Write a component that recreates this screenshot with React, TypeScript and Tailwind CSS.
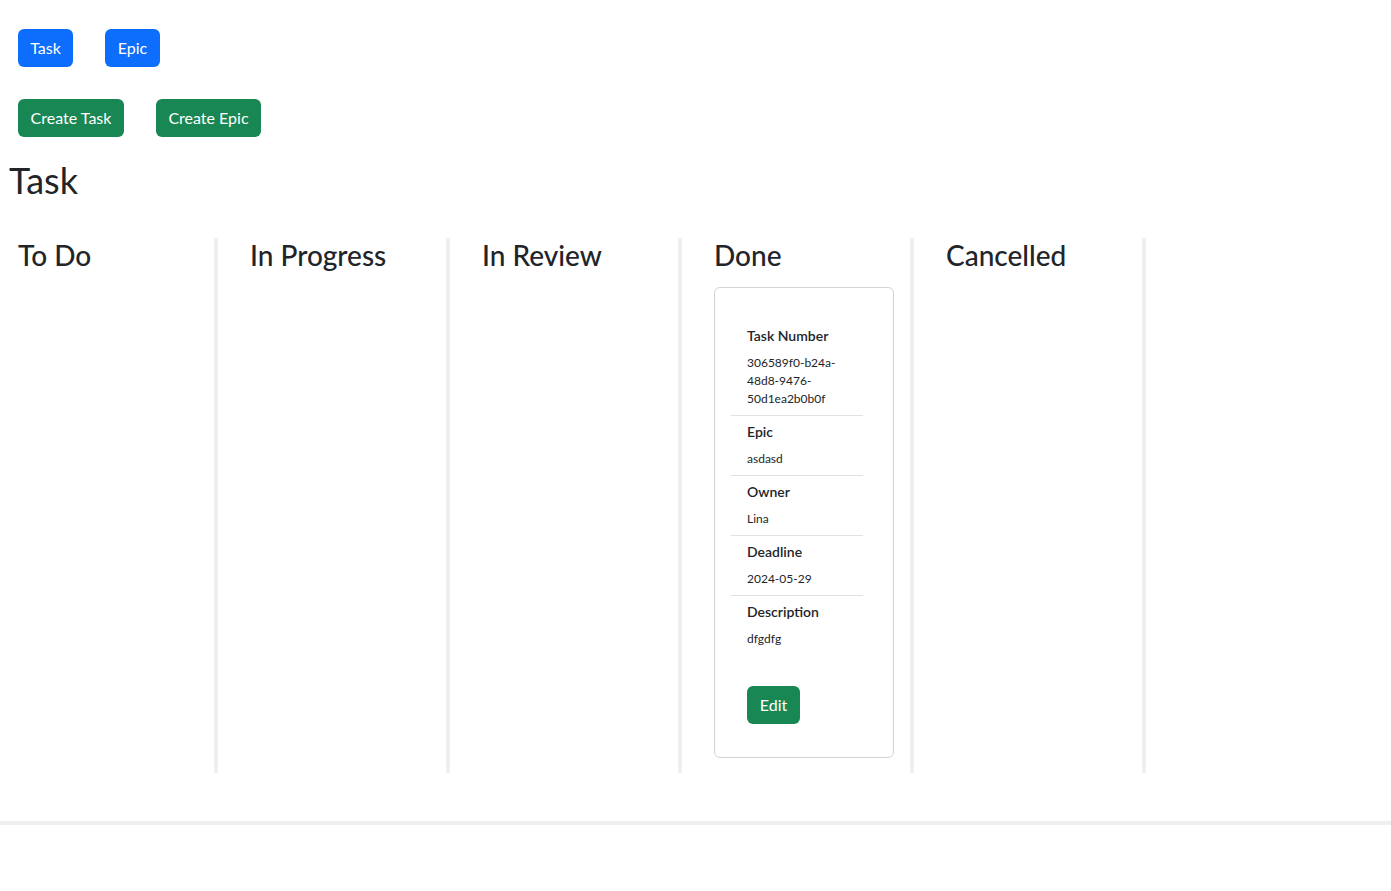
import React from 'react'

type Field = { label: string; value: string }

const COLUMNS = ['To Do', 'In Progress', 'In Review', 'Done', 'Cancelled']

// Única tarea cargada, en la columna "Done".
const DONE_TASK: Field[] = [
  { label: 'Task Number', value: '306589f0-b24a-48d8-9476-50d1ea2b0b0f' },
  { label: 'Epic', value: 'asdasd' },
  { label: 'Owner', value: 'Lina' },
  { label: 'Deadline', value: '2024-05-29' },
  { label: 'Description', value: 'dfgdfg' },
]

function Btn({ label, tone, width }: { label: string; tone: 'blue' | 'green'; width: string }) {
  const bg = tone === 'blue' ? 'bg-[#0d6efd]' : 'bg-[#198754]'
  return (
    <button
      type="button"
      className={`${bg} ${width} h-[38px] rounded-[6px] text-center text-[16px] leading-[24px] text-white`}
    >
      {label}
    </button>
  )
}

function TaskCard({ fields }: { fields: Field[] }) {
  return (
    <div className="w-[180px] rounded-[6px] border border-[#d3d3d3] pb-[33px] pl-[16px] pt-[32px]">
      <ul className="w-[132px]">
        {fields.map((f, i) => (
          <li
            key={f.label}
            className={`pb-[7px] pl-[16px] pr-[10px] pt-[5px] ${i < fields.length - 1 ? 'border-b border-[#dee2e6]' : ''}`}
          >
            <div className="text-[14px] font-semibold leading-[21px]">{f.label}</div>
            <div className="mt-[8px] break-words text-[12px] leading-[18px]">{f.value}</div>
          </li>
        ))}
      </ul>
      <div className="mt-[31px] pl-[16px]">
        <Btn label="Edit" tone="green" width="w-[53px]" />
      </div>
    </div>
  )
}

export default function App() {
  return (
    <div className="min-h-screen bg-white font-['Lato','Noto_Sans',sans-serif] text-[#212529]">
      <div className="flex gap-[32px] pl-[18px] pt-[29px]">
        <Btn label="Task" tone="blue" width="w-[55px]" />
        <Btn label="Epic" tone="blue" width="w-[55px]" />
      </div>
      <div className="flex gap-[32px] pl-[18px] pt-[32px]">
        <Btn label="Create Task" tone="green" width="w-[106px]" />
        <Btn label="Create Epic" tone="green" width="w-[105px]" />
      </div>

      <h1 className="mt-[22px] pl-[9px] text-[36px] font-normal leading-[43px]">Task</h1>

      <div className="-ml-[14px] mt-[36px] flex">
        {COLUMNS.map((col) => (
          <section key={col} className="h-[535px] w-[232px] border-r-4 border-[#efefef] pl-[32px]">
            <h3 className="text-[28px] font-medium leading-[34px]">{col}</h3>
            {col === 'Done' && (
              <div className="mt-[15px]">
                <TaskCard fields={DONE_TASK} />
              </div>
            )}
          </section>
        ))}
      </div>

      <div className="mt-[48px] h-[4px] w-full bg-[#efefef]" />
    </div>
  )
}
